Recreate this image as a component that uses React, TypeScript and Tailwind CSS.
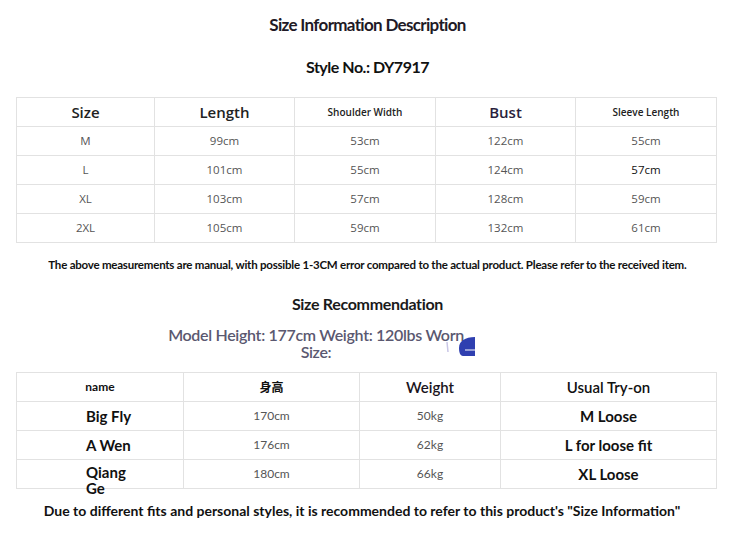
import React from "react";

const lato = { fontFamily: "Lato, 'Noto Sans', sans-serif" };

export default function App() {
  const t1 = [
    ["M", "99cm", "53cm", "122cm", "55cm"],
    ["L", "101cm", "55cm", "124cm", "57cm"],
    ["XL", "103cm", "57cm", "128cm", "59cm"],
    ["2XL", "105cm", "59cm", "132cm", "61cm"],
  ];
  const t2 = [
    ["Big Fly", "170cm", "50kg", "M Loose"],
    ["A Wen", "176cm", "62kg", "L for loose fit"],
    ["Qiang Ge", "180cm", "66kg", "XL Loose"],
  ];
  const cols1 = ["w-[138px]", "w-[140px]", "w-[141px]", "w-[140px]", "w-[141px]"];
  const cols2 = ["w-[167px]", "w-[176px]", "w-[141px]", "w-[216px]"];
  return (
    <div className="w-[735px] h-[539px] bg-white overflow-hidden text-[#222]" style={lato}>
      <div className="pt-[14px] h-[38px] text-center text-[17px] font-bold text-[#1f1a26] tracking-[-0.04em] leading-[22px]">
        Size Information Description
      </div>
      <div className="pt-[18px] h-[59px] text-center text-[16px] font-bold text-[#111] leading-[22px] tracking-[-0.03em]">
        Style No.: DY7917
      </div>
      <table className="ml-[16px] border-collapse table-fixed w-[700px]" style={{ fontFamily: "'Open Sans', sans-serif" }}>
        <tbody>
          <tr className="h-[29px]">
            <td className={`${cols1[0]} border border-[#e2e2e2] text-center text-[15px] font-semibold text-[#222]`}>Size</td>
            <td className={`${cols1[1]} border border-[#e2e2e2] text-center text-[15px] font-semibold text-[#222]`}>Length</td>
            <td className={`${cols1[2]} border border-[#e2e2e2] text-center text-[10px] font-semibold text-[#222]`}>Shoulder Width</td>
            <td className={`${cols1[3]} border border-[#e2e2e2] text-center text-[15px] font-semibold text-[#2a1f3d]`}>Bust</td>
            <td className={`${cols1[4]} border border-[#e2e2e2] text-center text-[10px] font-semibold text-[#222]`}>Sleeve Length</td>
          </tr>
          {t1.map((r, i) => (
            <tr key={i} className="h-[29px]">
              {r.map((c, j) => (
                <td
                  key={j}
                  className={`border border-[#e2e2e2] text-center text-[11.5px] ${i === 1 && j === 4 ? "text-[#111]" : "text-[#555]"}`}
                >
                  {c}
                </td>
              ))}
            </tr>
          ))}
        </tbody>
      </table>
      <div className="pt-[14px] h-[44px] text-center text-[12px] font-bold text-[#111] leading-[16px]">
        <span className="inline-block scale-x-[0.96] tracking-[-0.02em] whitespace-nowrap">
          The above measurements are manual, with possible 1-3CM error compared to the actual product. Please refer to the received item.
        </span>
      </div>
      <div className="pt-[7px] h-[34px] text-center text-[16px] font-bold text-[#1a1a1a] leading-[20px] tracking-[-0.02em]">
        Size Recommendation
      </div>
      <div className="relative h-[51px]">
        <div className="absolute left-[165px] top-[5px] w-[302px] text-center text-[16px] font-semibold text-[#5a5870] leading-[17px] tracking-[-0.02em]">
          Model Height: 177cm Weight: 120lbs Worn Size:
        </div>
        <svg className="absolute left-[440px] top-[15px]" width="40" height="24" viewBox="0 0 40 24">
          <path d="M7 6 L8 16" stroke="#c9c6e6" strokeWidth="1.5" fill="none" />
          <path d="M19 12 C19 5 25 1 35 1 L35 20 L23 20 C20 20 19 16 19 12 Z" fill="#2f3fb0" />
          <path d="M25 14 L35 14" stroke="#fff" strokeWidth="1" />
        </svg>
      </div>
      <table className="ml-[16px] border-collapse table-fixed w-[700px]" style={lato}>
        <tbody>
          <tr className="h-[29px]">
            <td className={`${cols2[0]} border border-[#e2e2e2] text-center text-[12px] font-bold text-[#111]`}>name</td>
            <td className={`${cols2[1]} border border-[#e2e2e2] text-center text-[12px] font-bold text-[#111]`} style={{ fontFamily: "'Noto Sans CJK SC', sans-serif" }}>身高</td>
            <td className={`${cols2[2]} border border-[#e2e2e2] text-center text-[15px] font-semibold text-[#1a1420]`}>Weight</td>
            <td className={`${cols2[3]} border border-[#e2e2e2] text-center text-[15px] font-semibold text-[#111]`}>Usual Try-on</td>
          </tr>
          {t2.map((r, i) => (
            <tr key={i} className="h-[29px]">
              <td className="border border-[#e2e2e2] p-0 align-middle">
                <div className="ml-[69px] w-[56px] h-[28px] relative">
                  <div className={`absolute left-0 w-[56px] text-[15px] font-bold text-[#111] leading-[16px] ${i === 2 ? "top-[4px]" : "top-[6px]"}`}>
                    {r[0]}
                  </div>
                </div>
              </td>
              <td className="border border-[#e2e2e2] text-center text-[12px] text-[#555]">{r[1]}</td>
              <td className="border border-[#e2e2e2] text-center text-[12px] text-[#555]">{r[2]}</td>
              <td className="border border-[#e2e2e2] text-center text-[15px] font-bold text-[#111] leading-[16px]">{r[3]}</td>
            </tr>
          ))}
        </tbody>
      </table>
      <div className="pt-[14px] pr-[11px] text-center text-[14px] font-bold text-[#111] leading-[16px]">
        Due to different fits and personal styles, it is recommended to refer to this product's "Size Information"
      </div>
    </div>
  );
}
